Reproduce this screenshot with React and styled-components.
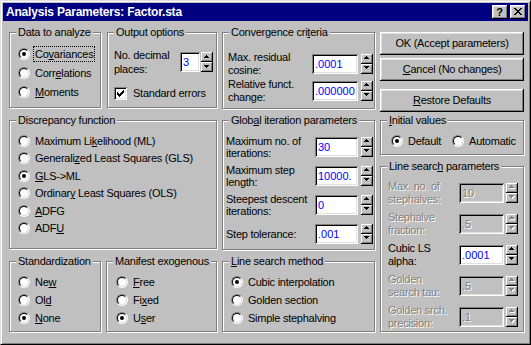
import React from "react";
import styled, { createGlobalStyle } from "styled-components";

const GlobalStyle = createGlobalStyle`
  html, body {
    margin: 0;
    padding: 0;
    background: #c0c0c0;
  }
  body {
    font-family: "Liberation Sans", Arial, sans-serif;
    font-size: 11px;
    letter-spacing: -0.25px;
    color: #000;
  }
  u {
    text-decoration: underline;
    text-underline-offset: 1px;
    text-decoration-thickness: 1px;
  }
`;

const raised = `
  box-shadow: inset -1px -1px 0 #000, inset 1px 1px 0 #fff,
    inset -2px -2px 0 #808080, inset 2px 2px 0 #dfdfdf;
`;

const sunken = `
  box-shadow: inset 1px 1px 0 #808080, inset -1px -1px 0 #fff,
    inset 2px 2px 0 #000, inset -2px -2px 0 #dfdfdf;
`;

const Window = styled.div`
  width: 531px;
  height: 345px;
  box-sizing: border-box;
  background: #c0c0c0;
  border: 1px solid;
  border-color: #dfdfdf #000 #000 #dfdfdf;
  box-shadow: inset 1px 1px 0 #fff, inset -1px -1px 0 #808080;
  padding: 2px;
  display: flex;
  flex-direction: column;
  overflow: hidden;
`;

const TitleBar = styled.div`
  height: 18px;
  flex: none;
  background: #000080;
  color: #fff;
  display: flex;
  align-items: center;
  padding: 0 2px 0 3px;
`;

const TitleText = styled.div`
  flex: 1;
  font-weight: bold;
  font-size: 12px;
  letter-spacing: -0.2px;
  white-space: nowrap;
`;

const TitleButtons = styled.div`
  display: flex;
  gap: 2px;
`;

const TitleButton = styled.div`
  width: 16px;
  height: 14px;
  box-sizing: border-box;
  background: #c0c0c0;
  ${raised}
  color: #000;
  font-weight: bold;
  font-size: 11px;
  letter-spacing: 0;
  display: flex;
  align-items: center;
  justify-content: center;
  padding: 0 1px 1px 0;
`;

const Client = styled.div`
  display: flex;
  gap: 5px;
  padding: 5px 0 0 6px;
`;

const Column = styled.div`
  width: ${(p) => p.$w}px;
  flex: none;
  display: flex;
  flex-direction: column;
`;

const Pair = styled.div`
  display: flex;
  gap: ${(p) => p.$gap}px;
`;

const Group = styled.div`
  box-sizing: border-box;
  margin-top: ${(p) => (p.$mt === undefined ? 6 : p.$mt)}px;
  height: ${(p) => p.$h}px;
  width: ${(p) => (p.$w ? `${p.$w}px` : "auto")};
  flex: none;
  border: 1px solid #808080;
  box-shadow: inset 1px 1px 0 #fff, 1px 1px 0 #fff;
  display: flex;
  flex-direction: column;
`;

const Legend = styled.div`
  align-self: flex-start;
  margin: -7px 0 0 6px;
  padding: 0 2px;
  height: 13px;
  line-height: 13px;
  background: #c0c0c0;
  white-space: nowrap;
`;

const Body = styled.div`
  display: flex;
  flex-direction: column;
  padding: ${(p) => p.$pad};
`;

const Row = styled.div`
  display: flex;
  align-items: center;
  height: ${(p) => p.$h}px;
`;

const InlineRow = styled.div`
  display: flex;
  align-items: center;
  height: ${(p) => p.$h}px;
  margin-left: ${(p) => p.$ml || 0}px;
`;

const RadioOuter = styled.span`
  box-sizing: border-box;
  width: 12px;
  height: 12px;
  flex: none;
  border-radius: 50%;
  border: 1px solid;
  border-color: #808080 #fff #fff #808080;
  display: flex;
`;

const RadioInner = styled.span`
  flex: 1;
  border-radius: 50%;
  border: 1px solid;
  border-color: #000 #dfdfdf #dfdfdf #000;
  background: #fff;
  display: flex;
  align-items: center;
  justify-content: center;
`;

const Dot = styled.span`
  width: 4px;
  height: 4px;
  border-radius: 50%;
  background: #000;
`;

const ChoiceLabel = styled.span`
  margin-left: 4px;
  padding: 0 1px;
  line-height: 14px;
  white-space: nowrap;
  outline: ${(p) => (p.$focus ? "1px dotted #000" : "none")};
`;

const Caption = styled.div`
  flex: 1;
  line-height: ${(p) => p.$lh || 13}px;
  white-space: nowrap;
  color: ${(p) => (p.$off ? "#808080" : "#000")};
  text-shadow: ${(p) => (p.$off ? "1px 1px 0 #fff" : "none")};
`;

const Edit = styled.div`
  box-sizing: border-box;
  width: ${(p) => p.$w}px;
  height: 20px;
  flex: none;
  background: ${(p) => (p.$off ? "#c0c0c0" : "#fff")};
  ${sunken}
  padding: 2px 3px;
  line-height: 16px;
  color: ${(p) => (p.$off ? "#808080" : "#0000ff")};
  text-shadow: ${(p) => (p.$off ? "1px 1px 0 #fff" : "none")};
  letter-spacing: 0;
  overflow: hidden;
  white-space: nowrap;
`;

const Spin = styled.div`
  display: flex;
  flex-direction: column;
  flex: none;
  margin-left: ${(p) => p.$gap}px;
`;

const SpinButton = styled.div`
  width: 12px;
  height: 10px;
  box-sizing: border-box;
  background: #c0c0c0;
  box-shadow: inset -1px -1px 0 #000, inset 1px 1px 0 #fff,
    inset -2px -2px 0 #808080;
  display: flex;
  align-items: center;
  justify-content: center;
  padding: 0 1px 1px 0;
`;

const CheckBox = styled.span`
  box-sizing: border-box;
  width: 13px;
  height: 13px;
  flex: none;
  background: #fff;
  ${sunken}
  display: flex;
  align-items: center;
  justify-content: center;
`;

const CheckRow = styled.div`
  display: flex;
  align-items: center;
  gap: 6px;
  margin-top: ${(p) => p.$mt}px;
  line-height: 14px;
`;

const Button = styled.div`
  box-sizing: border-box;
  height: 23px;
  margin-top: ${(p) => p.$mt}px;
  background: #c0c0c0;
  ${raised}
  display: flex;
  align-items: center;
  justify-content: center;
  padding-bottom: 1px;
  white-space: nowrap;
`;

function mn(text, idx) {
  if (idx === undefined || idx < 0) return text;
  return (
    <>
      {text.slice(0, idx)}
      <u>{text[idx]}</u>
      {text.slice(idx + 1)}
    </>
  );
}

function Radio({ checked }) {
  return (
    <RadioOuter>
      <RadioInner>{checked && <Dot />}</RadioInner>
    </RadioOuter>
  );
}

function Choice({ label, u, checked, focus }) {
  return (
    <>
      <Radio checked={checked} />
      <ChoiceLabel $focus={focus}>{mn(label, u)}</ChoiceLabel>
    </>
  );
}

function Arrow({ down, off }) {
  const d = down
    ? "M0 0h5v1h-5zM1 1h3v1h-3zM2 2h1v1h-1z"
    : "M2 0h1v1h-1zM1 1h3v1h-3zM0 2h5v1h-5z";
  return (
    <svg width="6" height="4" viewBox="0 0 6 4" shapeRendering="crispEdges">
      {off && <path d={d} fill="#fff" transform="translate(1 1)" />}
      <path d={d} fill={off ? "#808080" : "#000"} />
    </svg>
  );
}

function Spinner({ gap, off }) {
  return (
    <Spin $gap={gap}>
      <SpinButton>
        <Arrow off={off} />
      </SpinButton>
      <SpinButton>
        <Arrow down off={off} />
      </SpinButton>
    </Spin>
  );
}

function Field({ lines, value, w, gap, off, lh, h }) {
  return (
    <Row $h={h}>
      <Caption $off={off} $lh={lh}>
        {lines.map((l, i) => (
          <div key={i}>{l}</div>
        ))}
      </Caption>
      <Edit $w={w} $off={off}>
        {value}
      </Edit>
      <Spinner gap={gap} off={off} />
    </Row>
  );
}

function CheckMark() {
  return (
    <svg width="7" height="7" viewBox="0 0 7 7" shapeRendering="crispEdges">
      <path
        d="M6 0h1v1h-1zM5 1h2v1h-2zM0 2h1v1h-1zM4 2h3v1h-3zM0 3h2v1h-2zM3 3h3v1h-3zM0 4h5v1h-5zM1 5h3v1h-3zM2 6h1v1h-1z"
        fill="#000"
      />
    </svg>
  );
}

const discrepancy = [
  { label: "Maximum Likelihood (ML)", u: 10 },
  { label: "Generalized Least Squares (GLS)", u: 8 },
  { label: "GLS->ML", u: 0, checked: true },
  { label: "Ordinary Least Squares (OLS)", u: 7 },
  { label: "ADFG", u: 0 },
  { label: "ADFU", u: 3 },
];

const standardization = [
  { label: "New", u: 2 },
  { label: "Old", u: 2 },
  { label: "None", u: 0, checked: true },
];

const manifest = [
  { label: "Free", u: 0 },
  { label: "Fixed", u: 2 },
  { label: "User", u: 1, checked: true },
];

const lineMethod = [
  { label: "Cubic interpolation", checked: true },
  { label: "Golden section" },
  { label: "Simple stephalving" },
];

const globalParams = [
  { lines: ["Maximum no. of", "iterations:"], value: "30" },
  { lines: ["Maximum step", "length:"], value: "10000." },
  { lines: ["Steepest descent", "iterations:"], value: "0" },
  { lines: ["Step tolerance:"], value: ".001" },
];

const lineParams = [
  { lines: ["Max. no. of", "stephalves:"], value: "10", off: true },
  { lines: ["Stephalve", "fraction:"], value: ".5", off: true },
  { lines: ["Cubic LS", "alpha:"], value: ".0001" },
  { lines: ["Golden", "search tau:"], value: ".5", off: true },
  { lines: ["Golden srch.", "precision:"], value: ".1", off: true },
];

function RadioList({ items, h, pad }) {
  return (
    <Body $pad={pad}>
      {items.map((it) => (
        <Row key={it.label} $h={h}>
          <Choice {...it} />
        </Row>
      ))}
    </Body>
  );
}

export default function App() {
  return (
    <>
      <GlobalStyle />
      <Window>
        <TitleBar>
          <TitleText>Analysis Parameters: Factor.sta</TitleText>
          <TitleButtons>
            <TitleButton>?</TitleButton>
            <TitleButton>
              <svg width="8" height="7" viewBox="0 0 8 7" shapeRendering="crispEdges">
                <path
                  d="M0 0h2v1h-2zM6 0h2v1h-2zM1 1h2v1h-2zM5 1h2v1h-2zM2 2h4v1h-4zM3 3h2v1h-2zM2 4h4v1h-4zM1 5h2v1h-2zM5 5h2v1h-2zM0 6h2v1h-2zM6 6h2v1h-2z"
                  fill="#000"
                />
              </svg>
            </TitleButton>
          </TitleButtons>
        </TitleBar>

        <Client>
          <Column $w={208}>
            <Pair $gap={6}>
              <Group $w={92} $h={76}>
                <Legend>Data to analyze</Legend>
                <Body $pad="5px 0 0 8px">
                  <Row $h={19}>
                    <Choice label="Covariances" u={2} checked focus />
                  </Row>
                  <Row $h={19}>
                    <Choice label="Correlations" u={4} />
                  </Row>
                  <Row $h={19}>
                    <Choice label="Moments" u={0} />
                  </Row>
                </Body>
              </Group>
              <Group $w={110} $h={76}>
                <Legend>Output options</Legend>
                <Body $pad="9px 3px 0 6px">
                  <Row $h={28}>
                    <Caption $lh={14}>
                      <div>No. decimal</div>
                      <div>places:</div>
                    </Caption>
                    <Edit $w={20}>3</Edit>
                    <Spinner gap={1} />
                  </Row>
                  <CheckRow $mt={10}>
                    <CheckBox>
                      <CheckMark />
                    </CheckBox>
                    Standard errors
                  </CheckRow>
                </Body>
              </Group>
            </Pair>

            <Group $h={129} $mt={12}>
              <Legend>Discrepancy function</Legend>
              <RadioList items={discrepancy} h={17.5} pad="5px 0 0 8px" />
            </Group>

            <Pair $gap={5}>
              <Group $w={92} $h={71} $mt={12}>
                <Legend>Standardization</Legend>
                <RadioList items={standardization} h={18} pad="5px 0 0 8px" />
              </Group>
              <Group $w={111} $h={71} $mt={12}>
                <Legend>Manifest exogenous</Legend>
                <RadioList items={manifest} h={18} pad="5px 0 0 9px" />
              </Group>
            </Pair>
          </Column>

          <Column $w={153}>
            <Group $h={77}>
              <Legend>{mn("Convergence criteria", 15)}</Legend>
              <Body $pad="11px 1px 0 5px">
                <Field lines={["Max. residual", "cosine:"]} value=".0001" w={46} gap={3} h={27} />
                <Field lines={["Relative funct.", "change:"]} value=".000000" w={46} gap={3} h={27} />
              </Body>
            </Group>

            <Group $h={130} $mt={11}>
              <Legend>{mn("Global iteration parameters", 4)}</Legend>
              <Body $pad="5px 1px 0 3px">
                {globalParams.map((f) => (
                  <Field key={f.lines[0]} {...f} w={43} gap={3} h={29} lh={12} />
                ))}
              </Body>
            </Group>

            <Group $h={71} $mt={11}>
              <Legend>{mn("Line search method", 0)}</Legend>
              <RadioList items={lineMethod} h={18} pad="5px 0 0 8px" />
            </Group>
          </Column>

          <Column $w={144}>
            <Button $mt={6}>OK (Accept parameters)</Button>
            <Button $mt={3}>{mn("Cancel (No changes)", 0)}</Button>
            <Button $mt={8}>{mn("Restore Defaults", 0)}</Button>

            <Group $h={35} $mt={8}>
              <Legend>{mn("Initial values", 0)}</Legend>
              <Body $pad="5px 0 0 10px">
                <InlineRow $h={18}>
                  <Choice label="Default" checked />
                  <InlineRow $h={18} $ml={10}>
                    <Choice label="Automatic" />
                  </InlineRow>
                </InlineRow>
              </Body>
            </Group>

            <Group $h={166} $mt={11}>
              <Legend>{mn("Line search parameters", 10)}</Legend>
              <Body $pad="4px 5px 0 7px">
                {lineParams.map((f) => (
                  <Field key={f.lines[0]} {...f} w={45} gap={2} h={31} />
                ))}
              </Body>
            </Group>
          </Column>
        </Client>
      </Window>
    </>
  );
}
